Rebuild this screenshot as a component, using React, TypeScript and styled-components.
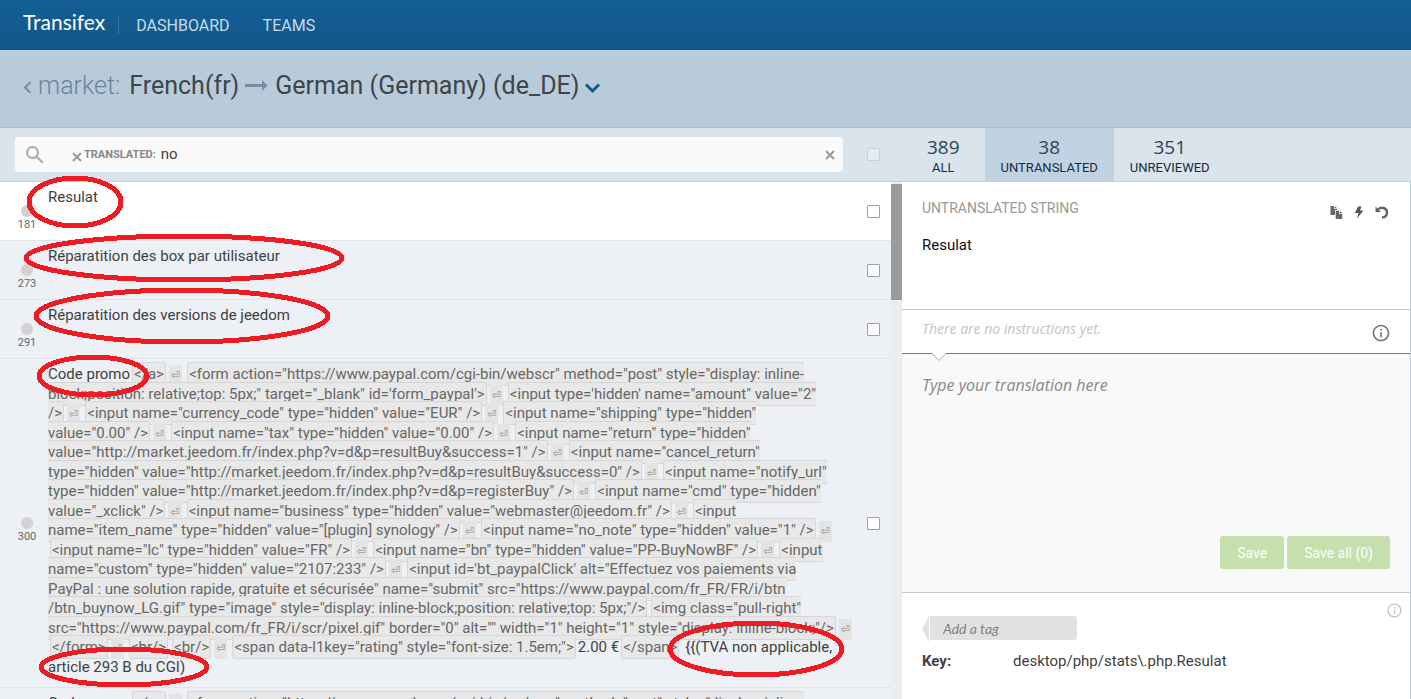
import React from "react";
import styled, { createGlobalStyle } from "styled-components";
import { MdInfoOutline, MdSearch } from "react-icons/md";

const GlobalStyle = createGlobalStyle`
  * { box-sizing: border-box; }
  body { margin: 0; background: #fff; }
  body, button, input, textarea { font-family: Roboto, "Liberation Sans", sans-serif; }
  h1, h2, p, ul, dl, dd, dt { margin: 0; padding: 0; }
  button { border: 0; padding: 0; background: none; cursor: pointer; }
`;

const Page = styled.div`
  position: relative;
  display: flex;
  flex-direction: column;
  height: 100vh;
  overflow: hidden;
  color: #404040;
`;

const TopBar = styled.header`
  display: flex;
  align-items: center;
  flex: none;
  height: 50px;
  padding-left: 23px;
  background: linear-gradient(#145e95, #12588a);
`;

const Logo = styled.a`
  padding-right: 13px;
  margin-bottom: 6px;
  font: 400 21px/26px Lato, sans-serif;
  color: #fff;
  text-decoration: none;
`;

const NavLink = styled.a`
  margin-right: 33px;
  padding-top: 2px;
  font-size: 16px;
  line-height: 20px;
  color: #c8dbe9;
  text-decoration: none;
`;

const NavDivider = styled.span`
  width: 1px;
  height: 17px;
  margin-right: 17px;
  background: #3c78a5;
`;

const TitleBar = styled.div`
  display: flex;
  align-items: center;
  flex: none;
  height: 78px;
  padding: 0 0 6px 23px;
  border-bottom: 1px solid #adc0d0;
  background: #b8cbdb;
`;

const Crumb = styled.a`
  display: flex;
  align-items: center;
  gap: 6px;
  margin-right: 9px;
  font-size: 25px;
  font-weight: 300;
  color: #69849b;
  text-decoration: none;
`;

const Language = styled.h1`
  font-size: 25px;
  line-height: 32px;
  font-weight: 400;
  color: #404448;
`;

const TitleArrow = styled.svg`
  margin: 0 7px 0 6px;
`;

const LanguageButton = styled.button`
  display: flex;
  margin: 4px 0 0 5px;
`;

const FilterBar = styled.div`
  display: flex;
  flex: none;
  height: 54px;
  border-bottom: 1px solid #bfd1e1;
  background: #dae4ec;
`;

const FilterLeft = styled.div`
  display: flex;
  align-items: center;
  flex: 1;
  min-width: 0;
  padding: 0 22px 0 15px;
`;

const SearchBox = styled.div`
  display: flex;
  align-items: center;
  flex: 1;
  height: 35px;
  margin-right: 24px;
  padding: 0 8px 0 8px;
  border-radius: 4px;
  background: #fafafa;
  color: #aaa;
`;

const FacetRemove = styled.button`
  display: flex;
  margin: 4px 2px 0 25px;
`;

const FacetLabel = styled.label`
  padding-top: 1px;
  font-size: 11px;
  line-height: 16px;
  font-weight: 700;
  color: #888;
`;

const FacetInput = styled.input`
  flex: 1;
  min-width: 0;
  margin: 0 0 2px 5px;
  padding: 0;
  border: 0;
  outline: 0;
  background: none;
  font-size: 15px;
  line-height: 20px;
  color: #404040;
`;

const Checkbox = styled.input`
  appearance: none;
  flex: none;
  width: 13px;
  height: 13px;
  margin: 0;
  border: 1px solid #8ea4b6;
  border-radius: 1px;
  background: #fff;
  &:disabled { border-color: #c3d1dc; background: #e4ebf1; }
`;

const Tabs = styled.nav`
  display: flex;
  flex: none;
  width: 509px;
`;

const Tab = styled.button<{ $wide?: boolean; $active?: boolean }>`
  display: flex;
  flex-direction: column;
  align-items: center;
  padding: 7px ${(p) => (p.$wide ? 25 : 16)}px 0;
  background: ${(p) => (p.$active ? "#c1d3e2" : "transparent")};
  font-size: 13px;
  line-height: 16px;
  color: #152c3e;
`;

const TabCount = styled.span`
  margin-bottom: 1px;
  font: 400 19px/24px "Open Sans", sans-serif;
  color: #2d4454;
`;

const Main = styled.main`
  display: flex;
  flex: 1;
  min-height: 0;
`;

const List = styled.ul`
  flex: 1;
  min-width: 0;
  overflow: hidden;
  list-style: none;
`;

const Row = styled.li<{ $selected?: boolean }>`
  display: flex;
  min-height: 59px;
  border-bottom: 1px solid #dde3e8;
  background: ${(p) => (p.$selected ? "#fff" : "#edf1f5")};
`;

const RowMeta = styled.div`
  display: flex;
  flex-direction: column;
  align-items: center;
  justify-content: center;
  gap: 1px;
  flex: none;
  width: 28px;
  margin-left: 13px;
  padding-top: 14px;
  font-size: 11px;
  line-height: 14px;
  color: #666;
`;

const StatusDot = styled.span`
  width: 12px;
  height: 12px;
  border-radius: 50%;
  background: #d2d2d2;
`;

const RowText = styled.p`
  flex: 1;
  min-width: 0;
  padding: 6px 0 10px 7px;
  font-size: 15px;
  line-height: 1.3;
  white-space: pre;
`;

const RowCheck = styled.div`
  display: flex;
  align-items: center;
  flex: none;
  width: 24px;
`;

const TagChip = styled.span`
  margin: 0 2px;
  padding: 2px 1px;
  border: 1px solid #d6d6d6;
  border-radius: 2px;
  background: #e8e8e8;
  color: #666;
`;

const ReturnMark = styled.span`
  margin: 0 3px 0 1px;
  padding: 4px 2px;
  background: #e4e4e4;
  font: 11px "DejaVu Sans", sans-serif;
  color: #8c8c8c;
`;

const ScrollTrack = styled.div`
  flex: none;
  width: 11px;
  padding-top: 2px;
  background: #ededed;
`;

const ScrollThumb = styled.div`
  height: 116px;
  background: #9b9b9b;
`;

const Editor = styled.section`
  display: flex;
  flex-direction: column;
  flex: none;
  width: 509px;
  border-right: 1px solid #b7cdd4;
`;

const Source = styled.div`
  flex: none;
  height: 128px;
  padding: 16px 20px 0;
  border-bottom: 1px solid #c8c8c8;
`;

const SourceHead = styled.div`
  display: flex;
  align-items: flex-start;
  justify-content: space-between;
  margin-bottom: 16px;
`;

const SourceLabel = styled.h2`
  font-size: 14px;
  line-height: 20px;
  font-weight: 400;
  color: #999;
`;

const Tools = styled.div`
  display: flex;
  align-items: center;
  gap: 11px;
  padding: 8px 1px 0 0;
`;

const ToolButton = styled.button`
  display: flex;
`;

const SourceText = styled.p`
  font-size: 15px;
  line-height: 20px;
  color: #111;
`;

const Instructions = styled.div`
  display: flex;
  align-items: center;
  justify-content: space-between;
  flex: none;
  height: 43px;
  padding: 2px 19px 0 20px;
`;

const InstructionsText = styled.p`
  padding-bottom: 8px;
  font: italic 400 14px/20px "Open Sans", sans-serif;
  color: #c4c4c4;
`;

const InfoButton = styled.button<{ $faint?: boolean }>`
  display: flex;
  font-size: ${(p) => (p.$faint ? 17 : 20)}px;
  color: ${(p) => (p.$faint ? "#c4c4c4" : "#777")};
`;

const Compose = styled.form`
  position: relative;
  display: flex;
  flex-direction: column;
  flex: none;
  height: 240px;
  padding: 21px 20px 23px;
  border-top: 1px solid #777;
  border-bottom: 1px solid #c8c8c8;
  background: #f9f9f9;
`;

const Notch = styled.svg`
  position: absolute;
  top: -1px;
  left: 29px;
`;

const TranslationInput = styled.textarea`
  flex: 1;
  padding: 0;
  border: 0;
  outline: 0;
  resize: none;
  background: none;
  font: italic 400 16px/20px "Open Sans", sans-serif;
  &::placeholder { color: #888; opacity: 1; }
`;

const Actions = styled.div`
  display: flex;
  justify-content: flex-end;
  gap: 3px;
`;

const SaveButton = styled.button`
  height: 33px;
  padding: 0 17px;
  border-radius: 3px;
  background: #c5dfad;
  font-size: 14px;
  color: #fff;
`;

const Details = styled.div`
  display: flex;
  flex-direction: column;
  padding: 9px 7px 0 20px;
`;

const DetailsHead = styled.div`
  display: flex;
  justify-content: space-between;
  align-items: flex-start;
  margin-bottom: 9px;
`;

const TagField = styled.label`
  display: flex;
  margin-top: 14px;
`;

const TagInput = styled.input`
  width: 147px;
  height: 24px;
  padding: 0 13px;
  border: 0;
  border-radius: 0 3px 3px 0;
  background: #e1e1e1;
  font: italic 400 14px/20px Lato, sans-serif;
  &::placeholder { color: #808080; opacity: 1; }
`;

const KeyList = styled.dl`
  display: flex;
  font-size: 15px;
  line-height: 20px;
`;

const KeyName = styled.dt`
  width: 91px;
  font-weight: 700;
`;

const Annotations = styled.svg`
  position: absolute;
  top: 0;
  left: 0;
  pointer-events: none;
`;

type Token = { kind: "text" | "tag" | "return"; value: string };

const text = (value: string): Token => ({ kind: "text", value });
const tag = (value: string): Token => ({ kind: "tag", value });
const ret: Token = { kind: "return", value: "⏎" };

const PROMO: Token[] = [
  text("Code promo"),
  tag("</a>"),
  ret,
  tag('<form action="https://www.paypal.com/cgi-bin/webscr" method="post" style="display: inline-\nblock;position: relative;top: 5px;" target="_blank" id=\'form_paypal\'>'),
  ret,
  tag('<input type=\'hidden\' name="amount" value="2"\n/>'),
  ret,
  tag('<input name="currency_code" type="hidden" value="EUR" />'),
  ret,
  tag('<input name="shipping" type="hidden"\nvalue="0.00" />'),
  ret,
  tag('<input name="tax" type="hidden" value="0.00" />'),
  ret,
  tag('<input name="return" type="hidden"\nvalue="http://market.jeedom.fr/index.php?v=d&p=resultBuy&success=1" />'),
  ret,
  tag('<input name="cancel_return"\ntype="hidden" value="http://market.jeedom.fr/index.php?v=d&p=resultBuy&success=0" />'),
  ret,
  tag('<input name="notify_url"\ntype="hidden" value="http://market.jeedom.fr/index.php?v=d&p=registerBuy" />'),
  ret,
  tag('<input name="cmd" type="hidden"\nvalue="_xclick" />'),
  ret,
  tag('<input name="business" type="hidden" value="webmaster@jeedom.fr" />'),
  ret,
  tag('<input\nname="item_name" type="hidden" value="[plugin] synology" />'),
  ret,
  tag('<input name="no_note" type="hidden" value="1" />'),
  ret,
  text("\n"),
  tag('<input name="lc" type="hidden" value="FR" />'),
  ret,
  tag('<input name="bn" type="hidden" value="PP-BuyNowBF" />'),
  ret,
  tag('<input\nname="custom" type="hidden" value="2107:233" />'),
  ret,
  tag('<input id=\'bt_paypalClick\' alt="Effectuez vos paiements via\nPayPal : une solution rapide, gratuite et sécurisée" name="submit" src="https://www.paypal.com/fr_FR/FR/i/btn\n/btn_buynow_LG.gif" type="image" style="display: inline-block;position: relative;top: 5px;"/>'),
  tag('<img class="pull-right"\nsrc="https://www.paypal.com/fr_FR/i/scr/pixel.gif" border="0" alt="" width="1" height="1" style="display: inline-block;"/>'),
  ret,
  text("\n"),
  tag("</form>"),
  ret,
  tag("<br/>"),
  tag("<br/>"),
  ret,
  tag('<span data-l1key="rating" style="font-size: 1.5em;">'),
  text("2.00 €"),
  tag("</span>"),
  text(" {{(TVA non applicable,\narticle 293 B du CGI)"),
];

const ROWS: { id: number; content: Token[] }[] = [
  { id: 181, content: [text("Resulat")] },
  { id: 273, content: [text("Réparatition des box par utilisateur")] },
  { id: 291, content: [text("Réparatition des versions de jeedom")] },
  { id: 300, content: PROMO },
  { id: 301, content: PROMO.slice(0, 4) },
];

const CIRCLES = [
  { cx: 75, cy: 202, rx: 46, ry: 24 },
  { cx: 184, cy: 258, rx: 158, ry: 22 },
  { cx: 182, cy: 316, rx: 146, ry: 26 },
  { cx: 93, cy: 376, rx: 54, ry: 19 },
  { cx: 756, cy: 649, rx: 86, ry: 26 },
  { cx: 124, cy: 667, rx: 83, ry: 18 },
];

function renderToken(token: Token, index: number) {
  if (token.kind === "tag") return <TagChip key={index}>{token.value}</TagChip>;
  if (token.kind === "return") return <ReturnMark key={index}>{token.value}</ReturnMark>;
  return <React.Fragment key={index}>{token.value}</React.Fragment>;
}

function Cross() {
  return (
    <svg width="10" height="10" viewBox="0 0 10 10" stroke="#999" strokeWidth="2" aria-hidden="true">
      <path d="M1 1l8 8M9 1l-8 8" />
    </svg>
  );
}

export default function App() {
  return (
    <Page>
      <GlobalStyle />
      <TopBar>
        <Logo href="#">Transifex</Logo>
        <NavDivider />
        <NavLink href="#">DASHBOARD</NavLink>
        <NavLink href="#">TEAMS</NavLink>
      </TopBar>

      <TitleBar>
        <Crumb href="#">
          <svg width="9" height="14" viewBox="0 0 9 14" fill="none" stroke="#748da3" strokeWidth="2" aria-hidden="true">
            <path d="M7.5 3L2 8.5 7.5 14" />
          </svg>
          market:
        </Crumb>
        <Language>French(fr)</Language>
        <TitleArrow width="23" height="12" viewBox="0 0 23 12" fill="#748da3" aria-hidden="true">
          <path d="M0 4h17V0L22.500 5.500 17 11V7H0z" />
        </TitleArrow>
        <Language>German (Germany) (de_DE)</Language>
        <LanguageButton aria-label="Change language">
          <svg width="15" height="10" viewBox="0 0 15 10" fill="none" stroke="#115a8e" strokeWidth="3" aria-hidden="true">
            <path d="M1 1.5l6.5 6.5L14 1.5" />
          </svg>
        </LanguageButton>
      </TitleBar>

      <FilterBar>
        <FilterLeft>
          <SearchBox>
            <MdSearch size={24} aria-hidden="true" />
            <FacetRemove aria-label="Remove filter"><Cross /></FacetRemove>
            <FacetLabel htmlFor="facet">TRANSLATED:</FacetLabel>
            <FacetInput id="facet" type="text" defaultValue="no" />
            <ToolButton aria-label="Clear search"><Cross /></ToolButton>
          </SearchBox>
          <Checkbox type="checkbox" disabled aria-label="Select all" />
        </FilterLeft>
        <Tabs>
          <Tab $wide><TabCount>389</TabCount>ALL</Tab>
          <Tab $active><TabCount>38</TabCount>UNTRANSLATED</Tab>
          <Tab><TabCount>351</TabCount>UNREVIEWED</Tab>
        </Tabs>
      </FilterBar>

      <Main>
        <List>
          {ROWS.map((row, i) => (
            <Row key={row.id} $selected={i === 0}>
              <RowMeta><StatusDot />{row.id}</RowMeta>
              <RowText>{row.content.map(renderToken)}</RowText>
              <RowCheck><Checkbox type="checkbox" aria-label={`Select string ${row.id}`} /></RowCheck>
            </Row>
          ))}
        </List>
        <ScrollTrack><ScrollThumb /></ScrollTrack>

        <Editor>
          <Source>
            <SourceHead>
              <SourceLabel>UNTRANSLATED STRING</SourceLabel>
              <Tools>
                <ToolButton aria-label="Copy source">
                  <svg width="13" height="13" viewBox="0 0 13 13" fill="#666" aria-hidden="true">
                    <path d="M0.500 0H4v3h3v1H5v5H0.500zM4.800 0L7 2.300H4.800z" />
                    <path d="M5.700 4.700H9v3h3.200V13H5.700zM9.800 4.700l2.400 2.300H9.800z" />
                  </svg>
                </ToolButton>
                <ToolButton aria-label="Machine translate">
                  <svg width="10" height="13" viewBox="0 0 10 13" fill="#555" aria-hidden="true">
                    <path d="M4 0.500h3.500L6 4.500h3.500L3 12.500l1.500-5.500H1z" />
                  </svg>
                </ToolButton>
                <ToolButton aria-label="Undo">
                  <svg width="14" height="13" viewBox="0 0 14 13" aria-hidden="true">
                    <path d="M3 3.500C6 0.500 12 1.500 12 6.500c0 3-2 4.800-5 5" fill="none" stroke="#666" strokeWidth="2.400" />
                    <path d="M0.500 0.500v5.500h5.500z" fill="#666" />
                  </svg>
                </ToolButton>
              </Tools>
            </SourceHead>
            <SourceText>Resulat</SourceText>
          </Source>

          <Instructions>
            <InstructionsText>There are no instructions yet.</InstructionsText>
            <InfoButton aria-label="About instructions"><MdInfoOutline /></InfoButton>
          </Instructions>

          <Compose onSubmit={(e) => e.preventDefault()}>
            <Notch width="16" height="9" viewBox="0 0 16 9" aria-hidden="true">
              <path d="M1 0h14L8 7.500z" fill="#fff" />
              <path d="M1 0.500l7 7 7-7" fill="none" stroke="#aaa" />
            </Notch>
            <TranslationInput aria-label="Translation" placeholder="Type your translation here" />
            <Actions>
              <SaveButton type="submit">Save</SaveButton>
              <SaveButton type="button">Save all (0)</SaveButton>
            </Actions>
          </Compose>

          <Details>
            <DetailsHead>
              <TagField>
                <svg width="8" height="26" viewBox="0 0 8 26" fill="#e1e1e1" aria-hidden="true">
                  <path d="M7 0v26L0 13z" />
                </svg>
                <TagInput aria-label="Add a tag" placeholder="Add a tag" />
              </TagField>
              <InfoButton $faint aria-label="About tags"><MdInfoOutline /></InfoButton>
            </DetailsHead>
            <KeyList>
              <KeyName>Key:</KeyName>
              <dd>desktop/php/stats\.php.Resulat</dd>
            </KeyList>
          </Details>
        </Editor>
      </Main>

      <Annotations width="850" height="699" fill="none" stroke="#ed1c24" strokeWidth="5" shapeRendering="crispEdges" aria-hidden="true">
        {CIRCLES.map((c) => (
          <ellipse key={c.cy} {...c} />
        ))}
      </Annotations>
    </Page>
  );
}
